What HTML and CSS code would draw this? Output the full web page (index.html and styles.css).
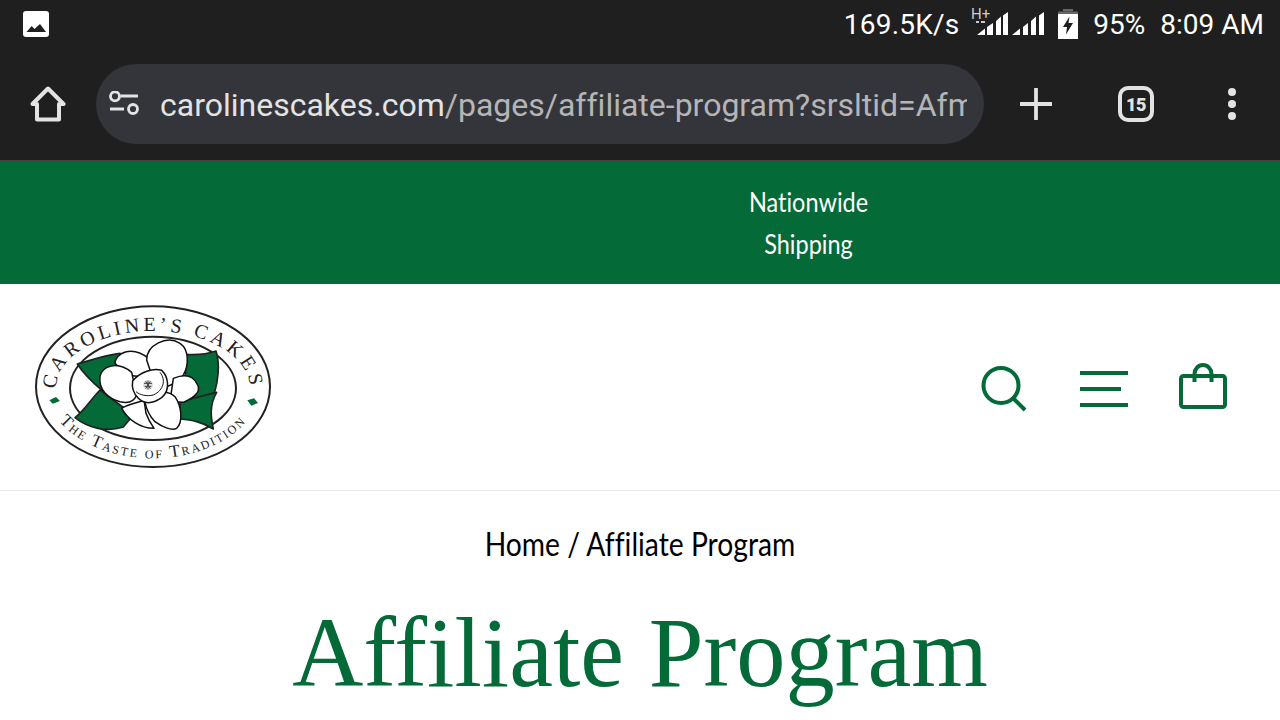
FILE: index.html
```html
<!DOCTYPE html>
<html lang="en">
<head>
    <meta charset="UTF-8">
    <title>Affiliate Program - Caroline's Cakes</title>
    <link rel="stylesheet" href="styles.css">
</head>
<body>

    <!-- phone status bar -->
    <div class="status-bar">
        <svg class="status-photo" viewBox="0 0 26 26">
            <rect width="26" height="26" rx="3" fill="#fff"/>
            <path d="M3.5 21 L8.7 15 L11.5 18 L17 13 L23 21 Z" fill="#1f1f1f"/>
        </svg>
        <div class="status-right">
            <span class="speed">169.5K/s</span>
            <svg class="signal" viewBox="0 0 76 38">
                <text class="signal-type" x="1" y="13.5">H+</text>
                <path d="M6 16h3v2h-3zM11 16h4v2h-4z" fill="#ccc"/>
                <path d="M7 30 L15 23.5 V30 Z M17 22 L23 18 V30 H17 Z M26 16 L31 11.5 V30 H26 Z M33 10.5 L38 7 V30 H33 Z" fill="#fff"/>
                <path d="M42 30 L50 23.5 V30 Z M53 22 L58 18 V30 H53 Z M61 16 L66 11.5 V30 H61 Z M69 10.5 L74 7 V30 H69 Z" fill="#fff"/>
            </svg>
            <svg class="battery" viewBox="0 0 20 30">
                <rect x="5" y="0" width="10" height="2.5" fill="#666"/>
                <rect x="0" y="2.5" width="20" height="2.5" fill="#666"/>
                <rect x="0" y="5" width="20" height="25" fill="#fff"/>
                <path d="M11.5 7.5 L5 18 H9 L8 25.5 L15 14 H10.5 Z" fill="#1f1f1f"/>
            </svg>
            <span class="battery-level">95%</span>
            <span class="clock">8:09 AM</span>
        </div>
    </div>

    <!-- browser toolbar -->
    <div class="toolbar">
        <svg class="home-icon" viewBox="0 0 36 36">
            <path d="M7 33.5 V18 H2.5 L18 2.5 L33.5 18 H29 V33.5 Z" fill="none" stroke="#e3e3e3" stroke-width="4" stroke-linejoin="round"/>
        </svg>
        <div class="url-pill">
            <svg class="tune-icon" viewBox="0 0 30 26">
                <circle cx="6" cy="5.3" r="4.5" fill="none" stroke="#e3e3e3" stroke-width="2.8"/>
                <path d="M11.5 5 H29 M1 18 H15" stroke="#e3e3e3" stroke-width="2.8"/>
                <circle cx="24" cy="18" r="4.5" fill="none" stroke="#e3e3e3" stroke-width="2.8"/>
            </svg>
            <div class="url-text"><span class="url-host">carolinescakes.com</span>/pages/affiliate-program?srsltid=AfmBOoq</div>
        </div>
        <svg class="plus-icon" viewBox="0 0 32 32">
            <path d="M16 1 V31 M1 16 H31" stroke="#e3e3e3" stroke-width="3.8" stroke-linecap="round"/>
        </svg>
        <div class="tab-count">15</div>
        <svg class="more-icon" viewBox="0 0 8 32">
            <circle cx="4" cy="4" r="4" fill="#e3e3e3"/>
            <circle cx="4" cy="16" r="4" fill="#e3e3e3"/>
            <circle cx="4" cy="28" r="4" fill="#e3e3e3"/>
        </svg>
    </div>

    <div class="announcement">
        <p>Nationwide<br>Shipping</p>
    </div>

    <header class="site-header">
        <svg class="logo" viewBox="0 0 810 555">
            <defs>
                <path id="arc-top" d="M108 280 A291 172 0 0 1 690 280"/>
                <path id="arc-bottom" d="M72 262 A327 228 0 0 0 726 262"/>
            </defs>
            <ellipse class="logo-line" cx="399" cy="275" rx="351" ry="241"/>
            <ellipse class="logo-line" cx="399" cy="280" rx="249" ry="155"/>

            <!-- leaves -->
            <path class="leaf" d="M172 207 C215 195 255 180 300 175 L340 300 L245 285 C215 260 190 235 172 207 Z"/>
            <path class="leaf" d="M495 178 C525 180 560 178 588 168 C602 210 592 265 584 292 L500 340 Z"/>
            <path class="leaf" d="M165 368 C195 345 215 310 240 285 L340 360 L310 396 C260 412 205 400 165 368 Z"/>
            <path class="leaf" d="M590 292 C568 330 572 365 580 402 C545 380 515 375 480 372 L480 320 Z"/>

            <!-- petals -->
            <path class="petal" d="M285 205 C285 175 335 150 385 190 L400 250 L320 240 Z"/>
            <path class="petal" d="M380 195 C380 150 440 120 480 145 C510 165 505 215 490 240 C475 260 455 270 440 275 L395 240 Z"/>
            <path class="petal" d="M460 250 C485 240 515 235 530 265 C545 285 530 305 490 322 L450 320 Z"/>
            <path class="petal" d="M240 245 C245 215 290 195 335 232 L350 300 C340 325 320 325 300 320 C265 310 235 285 240 245 Z"/>
            <path class="petal" d="M305 340 C330 325 350 325 372 315 L378 355 C385 375 395 390 402 400 C360 400 325 375 305 340 Z"/>
            <path class="petal" d="M375 322 C400 285 445 285 465 305 C485 335 490 380 470 400 C455 408 425 395 405 380 C390 365 380 345 375 322 Z"/>
            <path class="petal" d="M338 258 C360 230 400 218 425 226 C445 245 452 285 425 308 C400 325 375 330 355 310 C340 295 335 275 338 258 Z"/>
            <path class="petal-line" d="M420 232 C438 255 432 285 400 300 C380 305 360 300 348 290"/>
            <circle class="stamen" cx="384" cy="270" r="15"/>
            <path class="stamen-lines" d="M372 265 h24 M374 274 h20 M384 257 v26 M377 259 l14 22 M391 259 l-14 22"/>

            <text class="logo-text">
                <textPath href="#arc-top" startOffset="50%" text-anchor="middle">CAROLINE’S CAKES</textPath>
            </text>
            <text class="logo-text logo-text-small">
                <textPath href="#arc-bottom" startOffset="50%" text-anchor="middle">The Taste of Tradition</textPath>
            </text>

            <path class="diamond" d="M88 316 L108 306 L120 318 L98 326 Z"/>
            <path class="diamond" d="M682 316 L702 310 L714 324 L694 332 Z"/>
        </svg>

        <div class="header-icons">
            <svg class="header-icon" viewBox="0 0 48 48">
                <circle cx="20" cy="22.5" r="17.5"/>
                <path d="M33 36 L44 47"/>
            </svg>
            <svg class="header-icon" viewBox="0 0 48 48">
                <path d="M0 10 H48 M0 26 H41 M0 42 H48"/>
            </svg>
            <svg class="header-icon" viewBox="0 0 48 48">
                <rect x="2" y="13" width="44" height="31" rx="2.5"/>
                <path d="M15.5 19 V11 A8.5 9 0 0 1 32.5 11 V19"/>
            </svg>
        </div>
    </header>

    <main class="page">
        <nav class="breadcrumb">Home / Affiliate Program</nav>
        <h1 class="page-title">Affiliate Program</h1>
    </main>

</body>
</html>
```

FILE: styles.css
```css
:root {
    --green: #046a38;
    --bar-color: #1f1f1f;
    --pill-color: #34353a;
    --icon-color: #e3e3e3;
}

html, body {
    margin: 0;
    padding: 0;
    height: 720px;
    overflow: hidden;
    background-color: #fff;
}

body {
    font-family: Lato, "Liberation Sans", sans-serif;
    font-variant-ligatures: none;
}

.status-bar {
    display: flex;
    justify-content: space-between;
    align-items: center;
    height: 48px;
    box-sizing: border-box;
    padding: 1px 16px 0 23px;
    background-color: var(--bar-color);
    color: #fff;
    font-family: Roboto, sans-serif;
    font-size: 28px;
}

.status-photo {
    width: 26px;
    height: 26px;
    margin-top: -1px;
}

.status-right {
    display: flex;
    align-items: center;
}

.speed {
    margin-right: 11px;
    letter-spacing: 0.2px;
}

.signal {
    width: 76px;
    height: 38px;
    margin-right: 12px;
    margin-top: -1px;
}

.signal-type {
    font-family: Roboto, sans-serif;
    font-size: 15px;
    fill: #ccc;
}

.battery {
    width: 20px;
    height: 30px;
    margin-right: 15px;
    margin-top: -2px;
}

.battery-level {
    margin-right: 15px;
}

.toolbar {
    display: flex;
    align-items: center;
    height: 112px;
    box-sizing: border-box;
    padding: 0 0 0 30px;
    background-color: var(--bar-color);
}

.home-icon {
    width: 36px;
    height: 36px;
    margin-right: 30px;
}

.url-pill {
    display: flex;
    align-items: center;
    width: 888px;
    height: 80px;
    box-sizing: border-box;
    padding: 0 17px 0 13px;
    border-radius: 40px;
    background-color: var(--pill-color);
}

.tune-icon {
    flex: none;
    width: 30px;
    height: 26px;
    margin-right: 21px;
}

.url-text {
    flex: 1;
    overflow: hidden;
    white-space: nowrap;
    padding-top: 2px;
    font-family: Roboto, sans-serif;
    font-size: 32px;
    color: #b5b5b7;
}

.url-host {
    color: var(--icon-color);
}

.plus-icon {
    width: 32px;
    height: 32px;
    margin-left: 36px;
}

.tab-count {
    display: flex;
    justify-content: center;
    align-items: center;
    width: 36px;
    height: 36px;
    box-sizing: border-box;
    margin-left: 66px;
    border: 4px solid var(--icon-color);
    border-radius: 10px;
    color: var(--icon-color);
    font-family: Roboto, sans-serif;
    font-size: 18px;
    font-weight: 900;
    letter-spacing: -0.5px;
}

.more-icon {
    width: 8px;
    height: 32px;
    margin-left: 74px;
}

.announcement {
    box-sizing: border-box;
    height: 124px;
    padding-left: 336px;
    display: flex;
    justify-content: center;
    align-items: center;
    background-color: var(--green);
    border-top: 2px solid #444;
    color: #fff;
}

/* the shop's font is a condensed one, Lato squeezed to the same width */
.announcement p {
    margin: 0;
    text-align: center;
    font-size: 27px;
    line-height: 42px;
    transform: scaleX(0.87);
}

.site-header {
    display: flex;
    justify-content: space-between;
    align-items: center;
    height: 207px;
    box-sizing: border-box;
    padding: 0 53px 0 20px;
    border-bottom: 1px solid #e8e8e8;
}

.logo {
    width: 270px;
    height: 185px;
}

.logo-line {
    fill: #fff;
    stroke: #222;
    stroke-width: 6;
}

.leaf {
    fill: var(--green);
    stroke: #222;
    stroke-width: 5;
    stroke-linejoin: round;
}

.petal {
    fill: #fff;
    stroke: #111;
    stroke-width: 4.5;
    stroke-linejoin: round;
}

.petal-line {
    fill: none;
    stroke: #111;
    stroke-width: 3;
}

.stamen {
    fill: #ddd;
}

.stamen-lines {
    stroke: #444;
    stroke-width: 3;
    fill: none;
}

.logo-text {
    font-family: "Liberation Serif", serif;
    font-size: 60px;
    letter-spacing: 11px;
    fill: #222;
}

.logo-text-small {
    font-size: 52px;
    font-variant: small-caps;
    letter-spacing: 6px;
}

.diamond {
    fill: var(--green);
}

.header-icons {
    display: flex;
    align-items: center;
    gap: 51px;
    margin-top: -1px;
}

.header-icon {
    width: 48px;
    height: 48px;
    overflow: visible;
    fill: none;
    stroke: var(--green);
    stroke-width: 4;
}

.page {
    text-align: center;
}

.breadcrumb {
    margin-top: 33px;
    font-size: 32px;
    line-height: 40px;
    color: #000;
    transform: scaleX(0.883);
}

.page-title {
    margin: 29px 0 0;
    font-family: "Liberation Serif", serif;
    font-size: 98.5px;
    line-height: 120px;
    font-weight: 400;
    color: var(--green);
}
```
